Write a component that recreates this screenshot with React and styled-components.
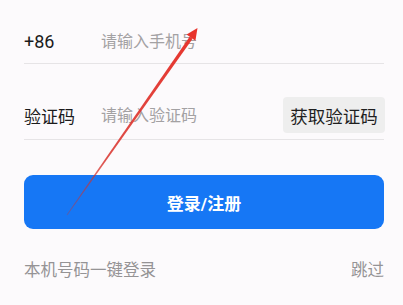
import React from "react";
import styled, { createGlobalStyle } from "styled-components";

const GlobalStyle = createGlobalStyle`
  html, body {
    margin: 0;
    padding: 0;
    background: #fcfafc;
  }
  body {
    font-family: Roboto, "Noto Sans CJK SC", sans-serif;
  }
`;

const Page = styled.div`
  position: relative;
  width: 403px;
  height: 305px;
  overflow: hidden;
  background: #fcfafc;
`;

const Form = styled.div`
  display: flex;
  flex-direction: column;
  width: 360px;
  padding: 19px 0 0 24px;
`;

const Row = styled.div`
  display: flex;
  align-items: center;
  height: ${(p) => p.$height}px;
  margin-top: ${(p) => p.$gap || 0}px;
  border-bottom: 1px solid #e6e4e6;
`;

const Label = styled.span`
  width: 77px;
  flex-shrink: 0;
  font-size: ${(p) => (p.$latin ? 18 : 17)}px;
  color: #1b1b1b;
`;

const Field = styled.input`
  flex: 1;
  min-width: 0;
  border: none;
  outline: none;
  background: transparent;
  padding: 0;
  font-family: Roboto, "Noto Sans CJK SC", sans-serif;
  font-size: 16px;
  color: #1b1b1b;

  &::placeholder {
    color: #a3a1a3;
  }
`;

const CodeButton = styled.button`
  flex-shrink: 0;
  width: 102px;
  height: 36px;
  margin-right: -1px;
  border: none;
  border-radius: 4px;
  background: #eeeeee;
  font-family: Roboto, "Noto Sans CJK SC", sans-serif;
  font-size: 17.5px;
  color: #1f1f1f;
  padding: 0;
`;

const Submit = styled.button`
  height: 54px;
  margin-top: 35px;
  border: none;
  border-radius: 9px;
  background: #1677f5;
  color: #ffffff;
  font-family: Roboto, "Noto Sans CJK SC", sans-serif;
  font-size: 17px;
  font-weight: 700;
  padding: 0;
`;

const Footer = styled.div`
  display: flex;
  justify-content: space-between;
  align-items: center;
  height: 24px;
  margin-top: 28px;
  font-size: 16.5px;
  color: #959395;
`;

const Arrow = styled.svg`
  position: absolute;
  left: 0;
  top: 0;
  pointer-events: none;
`;

function PointerArrow() {
  return (
    <Arrow width="403" height="305" viewBox="0 0 403 305">
      <defs>
        <linearGradient id="shaft" x1="67" y1="215" x2="197" y2="28" gradientUnits="userSpaceOnUse">
          <stop offset="0" stopColor="#c8302c" stopOpacity="0.35" />
          <stop offset="0.3" stopColor="#d8302a" stopOpacity="0.85" />
          <stop offset="1" stopColor="#e8332b" stopOpacity="1" />
        </linearGradient>
      </defs>
      <polygon
        points="67.4,215.2 66.6,214.8 189.6,36.8 192.6,38.8"
        fill="url(#shaft)"
      />
      <polygon points="197.5,28 186.6,34.6 195.4,40.8" fill="#e8332b" />
    </Arrow>
  );
}

export default function App() {
  return (
    <Page>
      <GlobalStyle />
      <Form>
        <Row $height={44}>
          <Label $latin>+86</Label>
          <Field placeholder="请输入手机号" />
        </Row>
        <Row $height={48} $gap={27}>
          <Label>验证码</Label>
          <Field placeholder="请输入验证码" />
          <CodeButton>获取验证码</CodeButton>
        </Row>
        <Submit>登录/注册</Submit>
        <Footer>
          <span>本机号码一键登录</span>
          <span>跳过</span>
        </Footer>
      </Form>
      <PointerArrow />
    </Page>
  );
}
